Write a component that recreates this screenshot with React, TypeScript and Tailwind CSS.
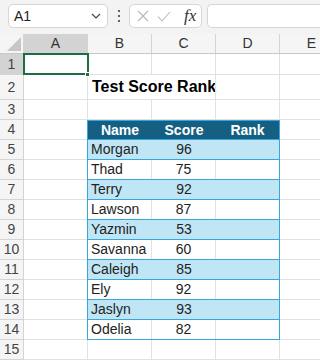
import React from 'react';

const rows = [
  { name: 'Morgan', score: 96 },
  { name: 'Thad', score: 75 },
  { name: 'Terry', score: 92 },
  { name: 'Lawson', score: 87 },
  { name: 'Yazmin', score: 53 },
  { name: 'Savanna', score: 60 },
  { name: 'Caleigh', score: 85 },
  { name: 'Ely', score: 92 },
  { name: 'Jaslyn', score: 93 },
  { name: 'Odelia', score: 82 },
];

const cols = ['A', 'B', 'C', 'D', 'E'];

function RowHead({ n, selected }: { n: number; selected?: boolean }) {
  return (
    <div
      className={`w-[24px] shrink-0 flex items-center justify-center border-r border-b border-[#d4d4d4] text-[14px] text-[#444] ${
        selected ? 'bg-[#d3d3d3]' : 'bg-[#f5f5f5]'
      }`}
    >
      {n}
    </div>
  );
}

function Cell({ children, className = '' }: { children?: React.ReactNode; className?: string }) {
  return (
    <div className={`w-[64px] shrink-0 border-r border-b border-[#e1e1e1] flex items-center ${className}`}>
      {children}
    </div>
  );
}

function FormulaBar() {
  return (
    <div className="h-[34px] bg-[#f3f3f3] flex items-start pt-[4px] pl-[8px]">
      <div className="w-[100px] h-[24px] bg-white border border-[#d6d6d6] rounded-[5px] flex items-center justify-between pl-[5px] pr-[6px]">
        <span className="text-[14px] text-[#222]">A1</span>
        <svg width="10" height="6" viewBox="0 0 10 6" fill="none" stroke="#444" strokeWidth="1.2">
          <path d="M1 1l4 4 4-4" />
        </svg>
      </div>
      <div className="w-[21px] h-[24px] flex flex-col items-center justify-center gap-[3px]">
        <span className="w-[2px] h-[2px] bg-[#333] rounded-full" />
        <span className="w-[2px] h-[2px] bg-[#333] rounded-full" />
        <span className="w-[2px] h-[2px] bg-[#333] rounded-full" />
      </div>
      <div className="w-[73px] h-[24px] bg-white border border-[#d6d6d6] rounded-[5px] flex items-center pl-[7px] gap-[8px]">
        <svg width="12" height="12" viewBox="0 0 12 12" fill="none" stroke="#b8b8b8" strokeWidth="1.1">
          <path d="M1 1l10 10M11 1L1 11" />
        </svg>
        <svg width="14" height="11" viewBox="0 0 14 11" fill="none" stroke="#b8b8b8" strokeWidth="1.1">
          <path d="M1 5.5l4 4.5 8-9" />
        </svg>
        <span className="ml-[5px] text-[17px] italic text-[#333] font-['Liberation_Serif',serif]">fx</span>
      </div>
      <div className="ml-[5px] flex-1 h-[24px] bg-white border border-[#d6d6d6] rounded-l-[5px] border-r-0" />
    </div>
  );
}

export default function App() {
  return (
    <div className="w-[320px] h-[360px] overflow-hidden bg-white font-['Liberation_Sans',sans-serif] text-[#222]">
      <FormulaBar />

      {/* column headers */}
      <div className="flex h-[20px] bg-[#f5f5f5] border-b border-[#c8c8c8]">
        <div className="w-[24px] shrink-0 relative border-r border-[#d4d4d4]">
          <svg className="absolute right-[2px] bottom-[2px]" width="14" height="14" viewBox="0 0 14 14">
            <path d="M14 0V14H0Z" fill="#c6c6c6" />
          </svg>
        </div>
        {cols.map((c) => (
          <div
            key={c}
            className={`w-[64px] shrink-0 flex items-center justify-center text-[14px] text-[#333] border-r border-[#d4d4d4] ${
              c === 'A' ? 'bg-[#d3d3d3]' : ''
            }`}
          >
            {c}
          </div>
        ))}
      </div>

      {/* row 1 */}
      <div className="flex h-[21px]">
        <RowHead n={1} selected />
        <Cell className="relative">
          <div className="absolute -left-[1px] -top-[1px] w-[66px] h-[22px] border-2 border-[#1e6c41]" />
          <div className="absolute -right-[3px] -bottom-[3px] w-[5px] h-[5px] bg-[#1e6c41] border border-white" />
        </Cell>
        <Cell />
        <Cell />
        <Cell />
        <Cell />
      </div>

      {/* row 2 */}
      <div className="flex h-[25px]">
        <RowHead n={2} />
        <Cell />
        <div className="w-[64px] shrink-0 border-b border-[#e1e1e1] flex items-center pl-[4px] overflow-visible whitespace-nowrap text-[16px] font-bold text-black">
          Test Score Rank
        </div>
        <div className="w-[64px] shrink-0 border-r border-b border-[#e1e1e1]" />
        <Cell />
        <Cell />
      </div>

      {/* row 3 */}
      <div className="flex h-[20px]">
        <RowHead n={3} />
        <Cell />
        <Cell />
        <Cell />
        <Cell />
        <Cell />
      </div>

      {/* row 4 - table header */}
      <div className="flex h-[20px]">
        <RowHead n={4} />
        <div className="w-[63px] shrink-0 border-b border-[#e1e1e1]" />
        <div className="w-[193px] shrink-0 flex bg-[#156082] border-x border-y border-x-[#36a6e0] border-y-[#36a6e0] text-white font-bold text-[14px]">
          <div className="w-[64px] flex items-center justify-center">Name</div>
          <div className="w-[64px] flex items-center justify-center">Score</div>
          <div className="w-[63px] flex items-center justify-center">Rank</div>
        </div>
        <Cell />
      </div>

      {rows.map((r, i) => {
        const band = i % 2 === 0;
        return (
          <div key={r.name} className="flex h-[20px]">
            <RowHead n={i + 5} />
            <div className="w-[63px] shrink-0 border-b border-[#e1e1e1]" />
            <div
              className={
                band
                  ? 'w-[193px] shrink-0 flex border-x border-b border-x-[#36a6e0] border-b-[#36a6e0] bg-[#c0e6f5] text-[14px]'
                  : 'w-[193px] shrink-0 flex border-x border-b border-x-[#36a6e0] border-b-[#36a6e0] bg-white text-[14px]'
              }
            >
              <div className={`w-[64px] flex items-center pl-[3px] ${band ? '' : 'border-r border-[#e1e1e1]'}`}>
                {r.name}
              </div>
              <div className={`w-[64px] flex items-center justify-center ${band ? '' : 'border-r border-[#e1e1e1]'}`}>
                {r.score}
              </div>
              <div className="w-[63px]" />
            </div>
            <Cell />
          </div>
        );
      })}

      {/* row 15 */}
      <div className="flex h-[20px]">
        <RowHead n={15} />
        <Cell />
        <Cell />
        <Cell />
        <Cell />
        <Cell />
      </div>
    </div>
  );
}
